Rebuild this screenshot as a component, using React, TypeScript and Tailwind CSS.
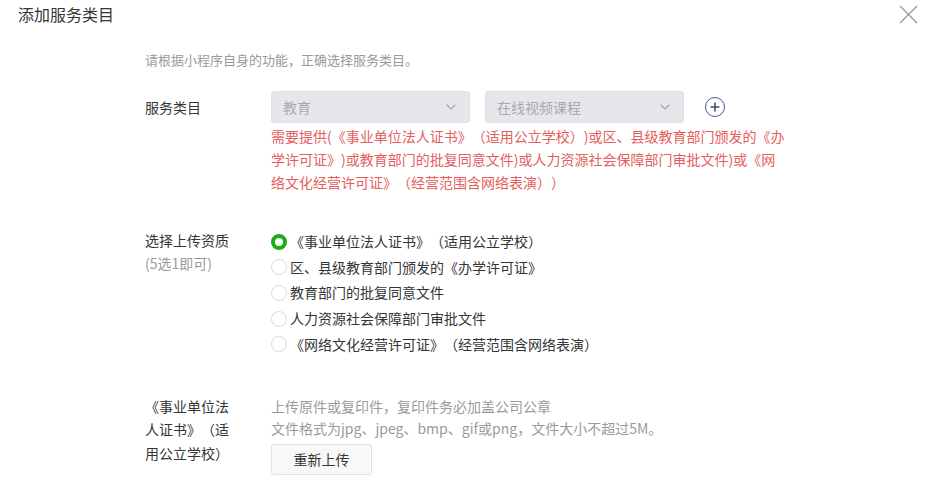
import { ChevronDown } from "lucide-react";

const font = { fontFamily: '"Noto Sans CJK SC", "Noto Sans", sans-serif' };

const options = [
    "《事业单位法人证书》（适用公立学校）",
    "区、县级教育部门颁发的《办学许可证》",
    "教育部门的批复同意文件",
    "人力资源社会保障部门审批文件",
    "《网络文化经营许可证》（经营范围含网络表演）",
];

const Select = ({ value }: { value: string }) => (
    <div className="flex h-[32px] w-[199px] items-center justify-between rounded-[3px] border border-[#dfe0e4] bg-[#e7e7eb] pl-[11px] pr-[10px] text-[14px] text-[#a9a9ad]">
        <span>{value}</span>
        <ChevronDown className="h-4 w-4 text-[#a3a3a8]" strokeWidth={1.6} />
    </div>
);

const Radio = ({ checked }: { checked?: boolean }) =>
    checked ? (
        <span className="h-[16px] w-[16px] shrink-0 rounded-full border-[4px] border-[#1aad19] bg-white" />
    ) : (
        <span className="h-[16px] w-[16px] shrink-0 rounded-full border border-[#dcdcdc] bg-white" />
    );

export default function App() {
    return (
        <div
            className="h-[487px] w-[940px] overflow-hidden bg-white text-[#353535] [text-spacing-trim:space-all]"
            style={font}
        >
            {/* Header */}
            <div className="flex items-start justify-between pl-[18px] pr-[22px] pt-[3px]">
                <h2 className="text-[16px] leading-[22px] text-[#353535]">添加服务类目</h2>
                <svg width="19" height="19" viewBox="0 0 19 19" className="mt-[2px]">
                    <path d="M1 1 L18 18 M18 1 L1 18" stroke="#9a9a9a" strokeWidth="1.4" />
                </svg>
            </div>

            <div className="pl-[145px]">
                <p className="mt-[24px] text-[13px] leading-[22px] text-[#9a9a9a]">
                    请根据小程序自身的功能，正确选择服务类目。
                </p>

                {/* Service category */}
                <div className="mt-[20px] flex">
                    <div className="w-[126px] pt-[5px] text-[14px] leading-[22px]">服务类目</div>
                    <div className="w-[516px]">
                        <div className="flex items-center">
                            <Select value="教育" />
                            <div className="ml-[15px]">
                                <Select value="在线视频课程" />
                            </div>
                            <div className="ml-[21px] flex h-[20px] w-[20px] items-center justify-center rounded-full border border-[#4a5787]">
                                <svg width="10" height="10" viewBox="0 0 10 10">
                                    <path d="M5 0.5 V9.5 M0.5 5 H9.5" stroke="#3d4a7c" strokeWidth="1.6" />
                                </svg>
                            </div>
                        </div>
                        <p className="mt-[2px] text-[14px] leading-[23px] text-[#e35e5d]">
                            需要提供(《事业单位法人证书》（适用公立学校）)或区、县级教育部门颁发的《办学许可证》)或教育部门的批复同意文件)或人力资源社会保障部门审批文件)或《网络文化经营许可证》（经营范围含网络表演））
                        </p>
                    </div>
                </div>

                {/* Qualification */}
                <div className="mt-[35px] flex">
                    <div className="w-[126px] text-[14px] leading-[23px]">
                        <div>选择上传资质</div>
                        <div className="text-[#9a9a9a]">(5选1即可)</div>
                    </div>
                    <div className="flex flex-col">
                        {options.map((o, i) => (
                            <label key={o} className="flex h-[25.6px] items-center gap-[3px] text-[14px]">
                                <Radio checked={i === 0} />
                                <span>{o}</span>
                            </label>
                        ))}
                    </div>
                </div>

                {/* Upload */}
                <div className="mt-[38px] flex">
                    <div className="w-[126px] pr-[34px] text-[14px] leading-[23.5px]">
                        《事业单位法人证书》（适用公立学校）
                    </div>
                    <div>
                        <div className="text-[14px] leading-[22px] text-[#9a9a9a]">
                            <div>上传原件或复印件，复印件务必加盖公司公章</div>
                            <div>文件格式为jpg、jpeg、bmp、gif或png，文件大小不超过5M。</div>
                        </div>
                        <button className="mt-[5px] h-[31px] w-[101px] rounded-[3px] border border-[#e2e2e2] bg-[#f8f8f8] text-[14px] text-[#353535]">
                            重新上传
                        </button>
                    </div>
                </div>
            </div>
        </div>
    );
}
